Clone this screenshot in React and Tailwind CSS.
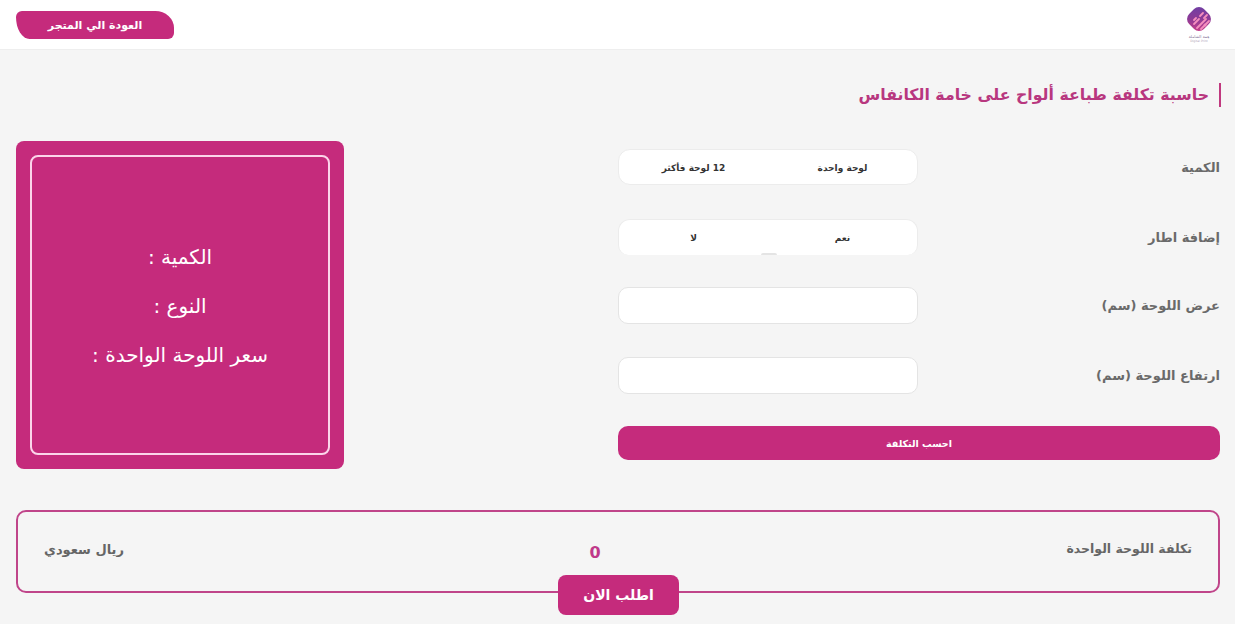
import React from "react";

function Logo() {
  return (
    <div className="flex flex-col items-center w-[30px]">
      <svg width="30" height="30" viewBox="0 0 30 30">
        <defs>
          <linearGradient id="lg" x1="0" y1="0" x2="1" y2="1">
            <stop offset="0" stopColor="#6a3fa6" />
            <stop offset="0.5" stopColor="#8d3a96" />
            <stop offset="1" stopColor="#d23f86" />
          </linearGradient>
        </defs>
        <rect x="4.5" y="4.5" width="21" height="21" rx="7" transform="rotate(45 15 15)" fill="url(#lg)" />
        <g stroke="#f58fbe" strokeWidth="1.8" strokeLinecap="round" fill="none">
          <path d="M10 20l5-5M13 24l9-9M17 25l8-8M16 12l3-3M20 14l3-3M10 16l2-2" />
          <circle cx="21" cy="21" r="0.6" />
        </g>
      </svg>
      <span className="text-[4px] leading-[5px] text-[#8a7a9a] whitespace-nowrap">همة الشاملة</span>
      <span className="text-[3px] leading-[4px] text-[#b0a6b8] whitespace-nowrap">Digital Print</span>
    </div>
  );
}

function Row({ label, children, h }) {
  return (
    <div className={`flex items-center justify-between ${h}`}>
      <label className="text-[13px] font-bold text-[#6a6a6a] leading-none">{label}</label>
      {children}
    </div>
  );
}

function Segment({ a, b, cut }) {
  return (
    <div
      className={`relative w-[300px] h-[36px] bg-white rounded-[12px] border border-[#ececec] grid grid-cols-2 items-center text-center text-[9px] font-bold text-[#333] ${
        cut ? "border-b-0 rounded-b-[10px]" : ""
      }`}
    >
      <span className="pt-[3px]">{a}</span>
      <span className="pt-[3px]">{b}</span>
      {cut ? (
        <span className="absolute left-[142px] bottom-0 w-[16px] h-[2px] rounded-t-full bg-[#e4e4e4]" />
      ) : null}
    </div>
  );
}

function Field() {
  return <input className="w-[300px] h-[37px] bg-white rounded-[10px] border border-[#e4e4e4] outline-none" />;
}

export default function App() {
  return (
    <div dir="rtl" className="h-[624px] overflow-hidden bg-[#f5f5f5] font-['DejaVu_Sans',sans-serif]">
      <header className="h-[50px] bg-white border-b border-[#eeeeee] flex items-start justify-between pt-[4px] pr-[21px] pl-[16px]">
        <Logo />
        <a className="mt-[7px] w-[158px] h-[28px] pt-[3px] bg-[#c52b7c] text-white text-[11px] font-bold flex items-center justify-center rounded-tl-[7px] rounded-br-[7px] [border-top-right-radius:22px_20px] [border-bottom-left-radius:16px_26px]">
          العودة الي المتجر
        </a>
      </header>

      <main className="px-[15px] pt-[33px]">
        <h1 className="border-r-2 border-[#c0397f] pr-[10px] -mr-px h-[24px] flex items-center text-[15.75px] font-bold text-[#b8377f] leading-none">
          حاسبة تكلفة طباعة ألواح على خامة الكانفاس
        </h1>

        <div className="flex justify-between items-start mt-[34px]">
          <div className="w-[602px] mt-[8px] flex flex-col">
            <Row label="الكمية" h="h-[36px]"><Segment a="لوحة واحدة" b="12 لوحة فأكثر" /></Row>
            <Row label="إضافة اطار" h="h-[36px] mt-[34px]"><Segment cut a="نعم" b="لا" /></Row>
            <Row label="عرض اللوحة (سم)" h="h-[37px] mt-[32px]"><Field /></Row>
            <Row label="ارتفاع اللوحة (سم)" h="h-[37px] mt-[33px]"><Field /></Row>
            <button className="mt-[32px] h-[34px] w-full rounded-[10px] bg-[#c52b7c] text-white text-[9.5px] font-bold pt-[2px]">
              احسب التكلفة
            </button>
          </div>

          <aside className="w-[328px] h-[328px] ml-px bg-[#c52b7c] rounded-[8px] p-[14px]">
            <div className="h-full border-2 border-[#fbd5ea] rounded-[8px] flex flex-col items-center justify-center gap-[24px] pt-[2px] text-white text-[20px] leading-[25px]">
              <p>الكمية :</p>
              <p>النوع :</p>
              <p>سعر اللوحة الواحدة :</p>
            </div>
          </aside>
        </div>

        <section className="relative mt-[41px] ml-px h-[83px] border-2 border-[#c0458a] rounded-[10px] grid grid-cols-3 items-center px-[26px] text-[12.5px] font-bold text-[#666]">
          <span className="-mt-[5px]">تكلفة اللوحة الواحدة</span>
          <span className="text-center text-[16px] text-[#c0398a] mt-[2px] pr-[46px]">0</span>
          <span className="text-left text-[13px] -mt-[4px]">ريال سعودي</span>
          <button className="absolute left-[540px] top-[63px] w-[121px] h-[40px] rounded-[8px] bg-[#c52b7c] text-white text-[14px] font-bold">
            اطلب الان
          </button>
        </section>
      </main>
    </div>
  );
}
